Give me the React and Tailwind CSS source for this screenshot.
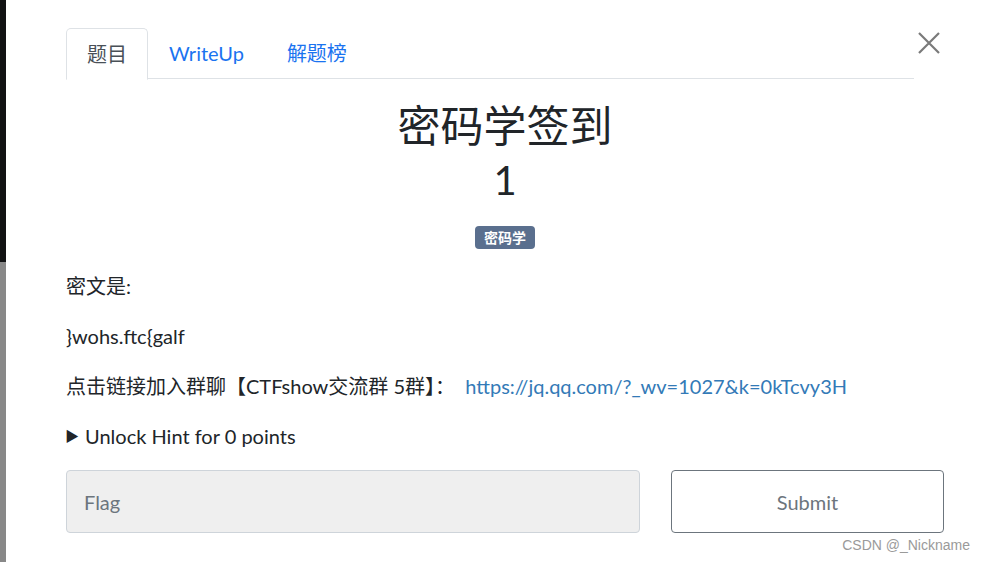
export default function App() {
  const font = { fontFamily: 'Lato, "Noto Sans CJK SC", sans-serif' };
  return (
    <div className="relative w-[986px] h-[562px] bg-white overflow-hidden flex" style={font}>
      <div className="w-[6px] flex flex-col shrink-0">
        <div className="h-[262px] bg-[#111213]"></div>
        <div className="flex-1 bg-[#888888]"></div>
      </div>
      <div className="flex-1 pl-[60px] pr-[42px] pt-[28px] flex flex-col">
        <div className="flex items-start">
          <div className="flex-1 flex border-b border-[#dee2e6] h-[51px]">
            <div className="w-[82px] h-[52px] -mb-px border border-[#dee2e6] border-b-white rounded-t-[5px] bg-white flex items-center justify-center text-[20px] text-[#495057]">题目</div>
            <div className="px-[21px] flex items-center text-[20px] text-[#1a73f0]">WriteUp</div>
            <div className="px-[22px] flex items-center text-[20px] text-[#1a73f0]">解题榜</div>
          </div>
          <div className="w-[30px] h-[30px] flex items-center justify-center">
            <svg width="24" height="24" viewBox="0 0 24 24" stroke="#7a7a7a" strokeWidth="2.2" fill="none">
              <path d="M2 2 L22 22 M22 2 L2 22" />
            </svg>
          </div>
        </div>
        <div className="text-center text-[#212529] text-[43px] leading-[54px] mt-[20px]">密码学签到</div>
        <div className="text-center text-[#212529] text-[40px] leading-[48px] mt-[3px]">1</div>
        <div className="flex justify-center mt-[22px]">
          <span className="bg-[#5a6f8e] text-white text-[14px] font-bold leading-[23px] px-[9px] rounded-[4px]">密码学</span>
        </div>
        <div className="text-[20px] text-[#212529] leading-[28px] mt-[23px] flex flex-col gap-[22px]">
          <div>密文是:</div>
          <div>{"}wohs.ftc{galf"}</div>
          <div>点击链接加入群聊【CTFshow交流群 5群】：&nbsp; <span className="text-[#337ab7]">https://jq.qq.com/?_wv=1027&amp;k=0kTcvy3H</span></div>
          <div className="flex items-center"><span className="text-[14px] mr-[6px] -ml-[1px]">▶</span>Unlock Hint for 0 points</div>
        </div>
        <div className="flex mt-[20px] gap-[31px]">
          <div className="w-[574px] h-[63px] bg-[#efefef] border border-[#ced4da] rounded-[4px] flex items-center px-[17px] text-[20px] text-[#6c757d]">Flag</div>
          <div className="flex-1 h-[63px] border border-[#6c757d] rounded-[4px] flex items-center justify-center text-[20px] text-[#6c757d]">Submit</div>
        </div>
      </div>
      <div className="absolute right-[16px] bottom-[6px] text-[14px] text-[#9a9a9a]" style={{ fontFamily: '"Liberation Sans", sans-serif' }}>CSDN @_Nickname</div>
    </div>
  );
}
